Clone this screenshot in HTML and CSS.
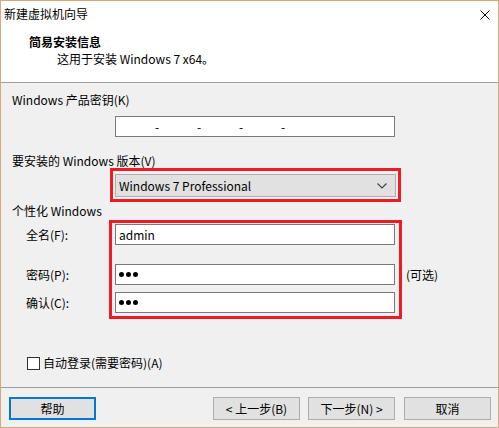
FILE: index.html
```html
<!DOCTYPE html>
<html>
	<head>
		<meta charset="utf-8">
		<title>新建虚拟机向导</title>
		<link rel="stylesheet" href="styles.css">
	</head>
	<body>
		<div class="window">
			<div class="titlebar">
				<span class="title">新建虚拟机向导</span>
				<svg class="close" width="10" height="10" viewBox="0 0 10 10">
					<path d="M0.5 0.5 L9.5 9.5 M9.5 0.5 L0.5 9.5" stroke="#000" stroke-width="1"/>
				</svg>
			</div>
			<div class="header">
				<div class="header-title">简易安装信息</div>
				<div class="header-sub">这用于安装 Windows 7 x64。</div>
			</div>
			<div class="content">
				<div class="label first">Windows 产品密钥(K)</div>
				<div class="keybox">
					<span>-</span><span>-</span><span>-</span><span>-</span>
				</div>

				<div class="label second">要安装的 Windows 版本(V)</div>
				<div class="mark combo-mark">
					<div class="combo">
						<span>Windows 7 Professional</span>
						<svg width="10" height="6" viewBox="0 0 10 6">
							<path d="M0.5 0.5 L5 5 L9.5 0.5" fill="none" stroke="#444" stroke-width="1.2"/>
						</svg>
					</div>
				</div>

				<div class="label third">个性化 Windows</div>
				<div class="personal">
					<div class="names">
						<div class="row-label">全名(F):</div>
						<div class="row-label pw">密码(P):</div>
						<div class="row-label cf">确认(C):</div>
					</div>
					<div class="mark fields">
						<div class="field">admin</div>
						<div class="field pw"><i></i><i></i><i></i></div>
						<div class="field cf"><i></i><i></i><i></i></div>
					</div>
					<div class="optional">(可选)</div>
				</div>

				<div class="autologon">
					<span class="check"></span>
					<span>自动登录(需要密码)(A)</span>
				</div>
			</div>
			<div class="footer">
				<div class="button help">帮助</div>
				<div class="spacer"></div>
				<div class="button">&lt; 上一步(B)</div>
				<div class="button next">下一步(N) &gt;</div>
				<div class="button cancel">取消</div>
			</div>
		</div>
	</body>
</html>
```

FILE: styles.css
```css
html, body {
	margin: 0;
}
body {
	font-family: "Noto Sans CJK SC", "Noto Sans", sans-serif;
	font-size: 12px;
	color: #000;
}

.window {
	width: 499px;
	height: 428px;
	box-sizing: border-box;
	border: 1px solid #d6a97c;
	background: #f0f0f0;
	display: flex;
	flex-direction: column;
}

.titlebar {
	height: 26px;
	background: #fff;
	display: flex;
	align-items: center;
	padding-left: 3px;
	padding-right: 8px;
}
.title {
	flex: 1;
	line-height: 16px;
}
.close {
	margin-top: 1px;
}

.header {
	height: 48px;
	background: #fff;
	border-bottom: 1px solid #a0a0a0;
	padding: 7px 0 0 28px;
}
.header-title {
	font-weight: bold;
	line-height: 16px;
}
.header-sub {
	line-height: 17px;
	margin-left: 28px;
}

.content {
	flex: 1;
	padding-left: 11px;
}
.label {
	line-height: 14px;
}
.label.first {
	margin-top: 10px;
}
.label.second {
	margin-top: 17px;
}
.label.third {
	margin-top: 2px;
}

.keybox {
	margin: 9px 0 0 103px;
	height: 19px;
	width: 258px;
	background: #fff;
	border: 1px solid #7a7a7a;
	display: flex;
	align-items: center;
	padding-left: 20px;
}
.keybox span {
	width: 42px;
	text-align: center;
	line-height: 16px;
}

.mark {
	border: 3px solid #ed1c24;
}
.combo-mark {
	margin: 0 0 0 98px;
	width: 281px;
	padding: 3px 2px 2px 2px;
}
.combo {
	height: 21px;
	background: #e1e1e1;
	border: 1px solid #adadad;
	display: flex;
	align-items: center;
	justify-content: space-between;
	padding: 0 8px 0 3px;
}

.personal {
	display: flex;
	margin-top: 2px;
}
.names {
	width: 97px;
	padding: 4px 0 0 14px;
	box-sizing: border-box;
}
.row-label {
	height: 21px;
	line-height: 21px;
}
.row-label.pw {
	margin-top: 19px;
}
.row-label.cf {
	margin-top: 7px;
}
.fields {
	width: 280px;
	padding: 1px 4px 3px 3px;
}
.field {
	height: 19px;
	background: #fff;
	border: 1px solid #7a7a7a;
	display: flex;
	align-items: center;
	padding-left: 3px;
	line-height: 16px;
}
.field.pw {
	margin-top: 19px;
}
.field.cf {
	margin-top: 7px;
}
.field i {
	width: 5px;
	height: 5px;
	border-radius: 50%;
	background: #000;
	margin-right: 2px;
}
.optional {
	margin: 44px 0 0 4px;
	height: 21px;
	line-height: 21px;
}

.autologon {
	display: flex;
	align-items: center;
	margin: 36px 0 0 15px;
	line-height: 16px;
}
.check {
	width: 11px;
	height: 11px;
	border: 1px solid #333;
	background: #fff;
	margin-right: 3px;
}

.footer {
	border-top: 1px solid #a0a0a0;
	padding: 9px 7px 7px 8px;
	display: flex;
}
.spacer {
	flex: 1;
}
.button {
	width: 85px;
	height: 21px;
	line-height: 21px;
	text-align: center;
	background: #e1e1e1;
	border: 1px solid #adadad;
}
.button.help {
	width: 83px;
	height: 19px;
	line-height: 19px;
	border: 2px solid #0078d7;
}
.button.next {
	margin-left: 8px;
}
.button.cancel {
	margin-left: 9px;
}
```
